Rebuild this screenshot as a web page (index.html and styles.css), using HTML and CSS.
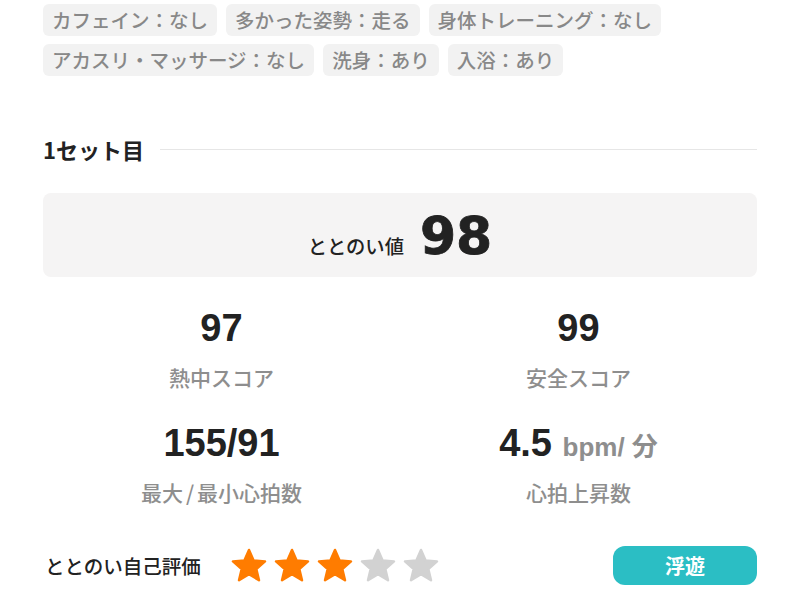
FILE: index.html
```html
<!DOCTYPE html>
<html lang="ja">
<head>
<meta charset="utf-8">
<link rel="stylesheet" href="styles.css">
</head>
<body>
<div class="page">
  <div class="chips">
    <span class="chip">カフェイン：なし</span>
    <span class="chip">多かった姿勢：走る</span>
    <span class="chip">身体トレーニング：なし</span>
    <span class="chip">アカスリ・マッサージ：なし</span>
    <span class="chip">洗身：あり</span>
    <span class="chip">入浴：あり</span>
  </div>

  <div class="set-head">
    <span class="set-title">1セット目</span>
    <span class="set-line"></span>
  </div>

  <div class="card">
    <div class="card-inner">
      <span class="card-label">ととのい値</span>
      <span class="card-value">98</span>
    </div>
  </div>

  <div class="stats">
    <div class="stat">
      <div class="stat-value">97</div>
      <div class="stat-label">熱中スコア</div>
    </div>
    <div class="stat">
      <div class="stat-value">99</div>
      <div class="stat-label">安全スコア</div>
    </div>
    <div class="stat">
      <div class="stat-value">155/91</div>
      <div class="stat-label">最大<span class="slash">/</span>最小心拍数</div>
    </div>
    <div class="stat">
      <div class="stat-value">4.5 <span class="unit">bpm/ 分</span></div>
      <div class="stat-label">心拍上昇数</div>
    </div>
  </div>

  <div class="rating">
    <span class="rating-label">ととのい自己評価</span>
    <div class="stars">
      <svg class="star on" viewBox="0 0 36 34"><polygon points="18,2 22.6,12.6 34,13.4 25.3,21 28,32.2 18,26.2 8,32.2 10.7,21 2,13.4 13.4,12.6"/></svg>
      <svg class="star on" viewBox="0 0 36 34"><polygon points="18,2 22.6,12.6 34,13.4 25.3,21 28,32.2 18,26.2 8,32.2 10.7,21 2,13.4 13.4,12.6"/></svg>
      <svg class="star on" viewBox="0 0 36 34"><polygon points="18,2 22.6,12.6 34,13.4 25.3,21 28,32.2 18,26.2 8,32.2 10.7,21 2,13.4 13.4,12.6"/></svg>
      <svg class="star off" viewBox="0 0 36 34"><polygon points="18,2 22.6,12.6 34,13.4 25.3,21 28,32.2 18,26.2 8,32.2 10.7,21 2,13.4 13.4,12.6"/></svg>
      <svg class="star off" viewBox="0 0 36 34"><polygon points="18,2 22.6,12.6 34,13.4 25.3,21 28,32.2 18,26.2 8,32.2 10.7,21 2,13.4 13.4,12.6"/></svg>
    </div>
    <span class="badge">浮遊</span>
  </div>
</div>
</body>
</html>
```

FILE: styles.css
```css
* { box-sizing: border-box; }
html, body { margin: 0; padding: 0; background: #fff; }
body {
  font-family: "Noto Sans CJK JP", "Noto Sans", sans-serif;
  color: #222;
}
.page {
  width: 800px;
  padding: 4px 43px 0 43px;
}
.chips {
  display: flex;
  flex-wrap: wrap;
  gap: 8px 9px;
}
.chip {
  height: 32px;
  line-height: 32px;
  padding: 0 9px;
  background: #f2f2f2;
  border-radius: 6px;
  color: #888;
  font-size: 19.5px;
  font-weight: 500;
  white-space: nowrap;
}
.set-head {
  display: flex;
  align-items: center;
  gap: 16px;
  margin-top: 59px;
  height: 28px;
}
.set-title {
  font-size: 22px;
  font-weight: 700;
  line-height: 28px;
  color: #222;
  white-space: nowrap;
}
.set-line {
  flex: 1;
  height: 1px;
  background: #e6e6e6;
}
.card {
  margin-top: 30px;
  height: 84px;
  background: #f5f4f4;
  border-radius: 8px;
  display: flex;
  justify-content: center;
  align-items: center;
  padding-top: 2px;
}
.card-inner {
  display: flex;
  align-items: baseline;
  gap: 16px;
}
.card-label {
  font-size: 19.3px;
  font-weight: 500;
  color: #222;
}
.card-value {
  font-family: "DejaVu Sans", "Liberation Sans", sans-serif;
  font-weight: 700;
  font-size: 52px;
  line-height: 52px;
  color: #222;
  -webkit-text-stroke: 0.8px #222;
}
.stats {
  display: grid;
  grid-template-columns: 1fr 1fr;
  row-gap: 29.6px;
  margin-top: 29.4px;
}
.stat {
  display: flex;
  flex-direction: column;
  align-items: center;
}
.stat-value {
  font-family: "Liberation Sans", Arial, sans-serif;
  font-weight: 700;
  font-size: 38px;
  line-height: 44px;
  height: 44px;
  color: #222;
  white-space: nowrap;
}
.unit {
  font-family: "Liberation Sans", "Noto Sans CJK JP", sans-serif;
  font-size: 26px;
  line-height: 1;
  color: #8e8e8e;
}
.stat-label {
  margin-top: 11.4px;
  font-size: 21px;
  line-height: 30px;
  height: 30px;
  font-weight: 500;
  color: #8e8e8e;
}
.slash {
  margin: 0 3px;
}
.rating {
  display: flex;
  align-items: center;
  margin-top: 39px;
  padding-left: 2px;
}
.rating-label {
  font-size: 19.5px;
  font-weight: 500;
  color: #222;
  white-space: nowrap;
}
.stars {
  display: flex;
  gap: 7px;
  margin-left: 30px;
}
.star {
  width: 36px;
  height: 34px;
  display: block;
}
.star polygon {
  stroke-width: 2.5;
  stroke-linejoin: round;
}
.star.on polygon { fill: #ff7c00; stroke: #ff7c00; }
.star.off polygon { fill: #d2d2d2; stroke: #d2d2d2; }
.badge {
  margin-left: auto;
  width: 144px;
  height: 39px;
  line-height: 39px;
  border-radius: 12px;
  background: #2bbec4;
  color: #fff;
  text-align: center;
  font-size: 20px;
  font-weight: 700;
}
```
